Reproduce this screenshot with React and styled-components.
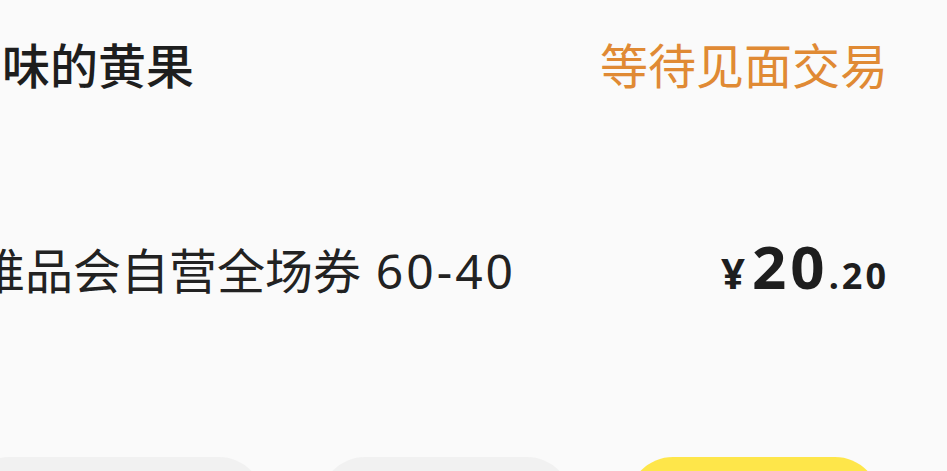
import React from "react";
import styled, { createGlobalStyle } from "styled-components";

const GlobalStyle = createGlobalStyle`
  html, body {
    margin: 0;
    padding: 0;
    background: #fafafa;
    overflow: hidden;
  }
  body {
    font-family: "Noto Sans CJK SC", "Noto Sans", sans-serif;
  }
`;

const Card = styled.div`
  width: 947px;
  height: 471px;
  display: flex;
  flex-direction: column;
  background: #fafafa;
  overflow: hidden;
`;

const Header = styled.div`
  display: flex;
  justify-content: space-between;
  align-items: flex-start;
  padding: 39px 59px 0 2px;
`;

const ShopName = styled.div`
  font-size: 48px;
  font-weight: 500;
  color: #1e1e1e;
  line-height: 1;
  white-space: nowrap;
`;

const Status = styled.div`
  font-size: 48px;
  color: #e08a34;
  line-height: 1;
  white-space: nowrap;
`;

const Item = styled.div`
  display: flex;
  justify-content: space-between;
  align-items: baseline;
  margin-top: 149px;
  padding-right: 58px;
`;

const ItemName = styled.div`
  margin-left: -23px;
  font-size: 48px;
  color: #222;
  line-height: 1;
  white-space: nowrap;
`;

const Num = styled.span`
  font-family: "Noto Sans", sans-serif;
  letter-spacing: 3px;
  margin-left: 4px;
`;

const Price = styled.div`
  display: flex;
  align-items: baseline;
  font-family: "Noto Sans", sans-serif;
  font-weight: 700;
  color: #1e1e1e;
  line-height: 1;
`;

const PricePart = styled.span`
  font-size: ${(p) => p.$size}px;
  letter-spacing: ${(p) => p.$spacing || 0}px;
  margin-right: ${(p) => p.$gap || 0}px;
`;

const Actions = styled.div`
  display: flex;
  justify-content: flex-end;
  gap: 56px;
  margin-top: auto;
  margin-bottom: -76px;
  padding-right: 67px;
`;

const ActionButton = styled.div`
  flex: none;
  width: ${(p) => p.$width || 252}px;
  height: 90px;
  border-radius: 45px;
  background: ${(p) => (p.$primary ? "#fee64a" : "#f1f1f1")};
`;

export default function App() {
  return (
    <>
      <GlobalStyle />
      <Card>
        <Header>
          <ShopName>味的黄果</ShopName>
          <Status>等待见面交易</Status>
        </Header>
        <Item>
          <ItemName>
            唯品会自营全场券 <Num>60-40</Num>
          </ItemName>
          <Price>
            <PricePart $size={42} $gap={7}>¥</PricePart>
            <PricePart $size={60} $spacing={4}>20</PricePart>
            <PricePart $size={36} $spacing={3}>.20</PricePart>
          </Price>
        </Item>
        <Actions>
          <ActionButton $width={300} />
          <ActionButton />
          <ActionButton $primary />
        </Actions>
      </Card>
    </>
  );
}
